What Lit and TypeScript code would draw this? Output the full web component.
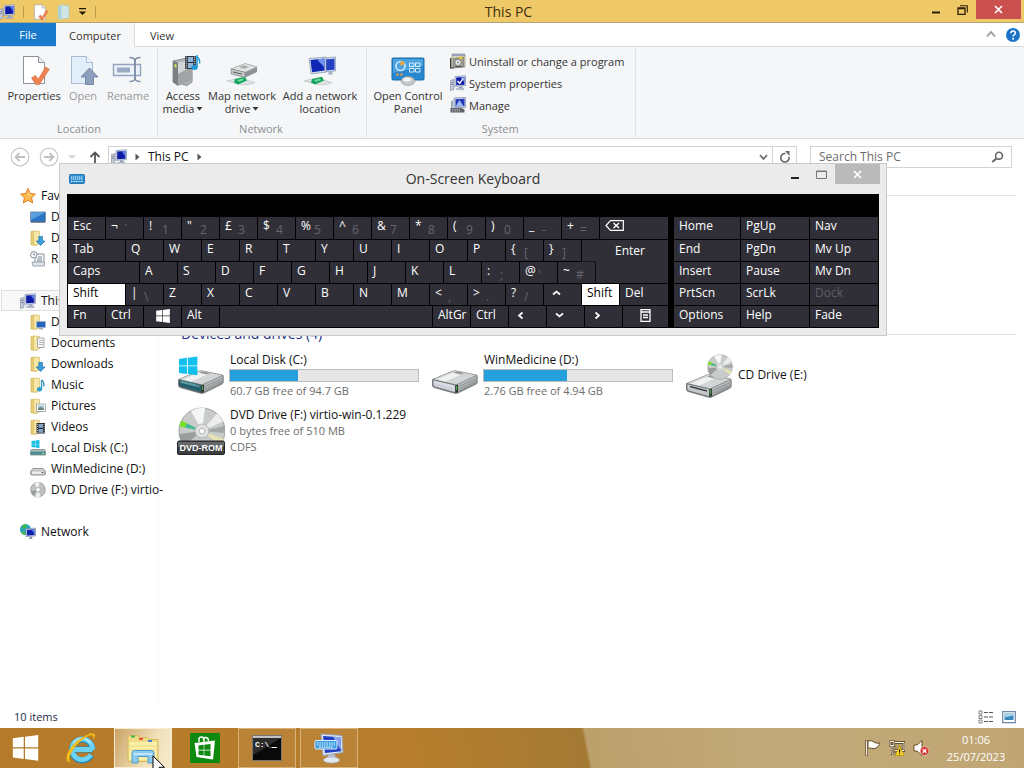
import { LitElement, html, svg, css, nothing } from "lit";
import { customElement } from "lit/decorators.js";
import { classMap } from "lit/directives/class-map.js";

type Art = unknown;

const icon = (w: number, h: number, box: string, body: Art) =>
  html`<svg width=${w} height=${h} viewBox=${box} aria-hidden="true">${body}</svg>`;

/* ---- shared drawings ---- */
const pcArt = svg`
  <path d="M.5 5.500l3.500-1v10l-3.500 1z" fill="#c3c9d4" stroke="#79829a" stroke-width=".6"/>
  <path d="M1.300 7.500h1.800M1.300 9.500h1.800" stroke="#5d6a86" stroke-width=".8"/>
  <path d="M5 1.500L15.500.7v10L5 11.400z" fill="#d5dcea" stroke="#8590ac" stroke-width=".7"/>
  <path d="M6.200 2.600l8.200-.7v7.800l-8.200.5z" fill="#0c1ba6"/>
  <path d="M10.500 2.200l3.900-.3v5.500z" fill="#5e7bea"/>
  <path d="M9 11.200h3.300l.6 2.300H8.600z" fill="#98a2b8"/><path d="M6.500 13.300h7.500v1.400H6.500z" fill="#b9c1d1" stroke="#8b94a8" stroke-width=".4"/>`;
const folderArt = svg`
  <path d="M1 1.500h6.500v13.500H1z" fill="#e9cf72" stroke="#c9a94d" stroke-width=".6"/>
  <path d="M3.500.8l6 .7v12.500l-6 1.500z" fill="#f6e7a6" stroke="#cdb35c" stroke-width=".6"/>`;
const sheetArt = svg`
  <path d="M5.500 1.500h15l6 6V28.500h-21z" fill="#fff" stroke="#8f9299"/>
  <path d="M20.500 1.500v6h6" fill="#e9ebee" stroke="#8f9299"/>`;
const tickArt = svg`<path d="M13.500 23l4-2.400 2.800 3.600L27.500 12l3.800 2.300-9.800 15-3.500.4z" fill="#ee8150" stroke="#d9683a" stroke-width=".6"/>`;

const pc16 = icon(16, 16, "0 0 16 16", pcArt);
const folder = (extra: Art) => icon(16, 16, "0 0 16 16", svg`${folderArt}${extra}`);

const driveBody = (face: string) => svg`
  <path d="M1.500 28.500L22 20q1.500-.5 3.500 0l20 4q1 .5.800 2v5q0 1.500-1.500 2.300L27 42q-1.500.7-3.500.3L3 36.500q-1.500-.6-1.500-2z" fill="#8c8f90" stroke="#6f7273" stroke-width=".7"/>
  <path d="M2.500 28.300L22.500 20q1-.4 2.500 0L45 24.300 25 33.500z" fill="#d3d5d6"/>
  <path d="M6 28.500L22.500 21.500l8 1.700L14 30.700z" fill="#f0f1f1"/>
  <path d="M22 21.700l3.500-1.400 8 1.700-4 1.500z" fill="#9a9da0"/>
  <path d="M2 28.800l22.500 5.200v7.700L4 36q-2-.5-2-2z" fill=${face} stroke="#5d6162" stroke-width=".7"/>
  <path d="M3.500 31l19 4.600" stroke="#fff" stroke-opacity=".35" stroke-width="1.500"/>
  <path d="M27 33.500l18.500-8.500v5.500L27 40z" fill="#b4b7b8"/><path d="M27 36l18.500-8.500M27 38.500l18.500-9" stroke="#85898b" stroke-width=".8"/>
  <path d="M24.300 34.500l2.700-1v7.800l-2.700.7z" fill="#2c3a2e"/><path d="M25.600 35v4" stroke="#52d25a" stroke-width=".8"/>`;
const winLogo = (c: string) => svg`
  <path d="M0 2.600l8.600-1.200v8.300H0zM9.600 1.300L20 0v9.700H9.600zM0 10.700h8.600V19L0 17.800zM9.600 10.700H20v9.700L9.600 19z" fill=${c}/>`;
const discArt = svg`
  <circle cx="25" cy="24" r="23" fill="#c9cbcb" stroke="#8d9090" stroke-width=".8"/>
  <path d="M25 24L14 4a23 23 0 0 1 14-3z" fill="#f4f5f5"/>
  <path d="M25 24L40 6.500a23 23 0 0 1 6 8z" fill="#edeeee"/>
  <path d="M25 24L2.300 19.500A23 23 0 0 1 4.500 13.500z" fill="#7be028"/>
  <path d="M25 24L10 16.500 8 20.500z" fill="#43b5a4"/>
  <path d="M25 24L2 27a23 23 0 0 0 5 12z" fill="#9b9e9e"/>
  <path d="M25 24l22 8a23 23 0 0 1-4 6z" fill="#e7e4b0"/>
  <path d="M25 24L47.500 19a23 23 0 0 1 .2 7z" fill="#a4a7a7"/>
  <circle cx="25" cy="24" r="7" fill="#dfe1e1" stroke="#a3a6a6" stroke-width=".7"/>
  <circle cx="25" cy="24" r="2.800" fill="#fff" stroke="#909393" stroke-width=".6"/>`;

const driveIcons: Record<string, Art> = {
  system: icon(48, 48, "0 0 48 48", svg`${driveBody("#24606f")}<path d="M4 30l15 4" stroke="#45a9a6"/><g transform="translate(2 5.500) scale(.92)">${winLogo("#12c0ee")}</g>`),
  plain: icon(48, 48, "0 0 48 48", driveBody("#cfd0da")),
  cd: icon(48, 48, "0 0 48 48", svg`<g transform="translate(0 4)">${driveBody("#c5c8ca")}<path d="M5 31.500l17 4.500" stroke="#3c3f40" stroke-width="1.400"/></g><g transform="translate(21.500 3) scale(.54)">${discArt}</g>`),
  dvd: icon(48, 48, "0 0 48 48", svg`${discArt}
    <rect x=".5" y="34" width="47" height="13.500" rx="1.500" fill="#3c3e40" stroke="#252628"/>
    <path d="M1 35h46v5H1z" fill="#65686b"/>
    <text x="24" y="44" text-anchor="middle" font-family="Liberation Sans, sans-serif" font-size="9" font-weight="700" fill="#fff">DVD-ROM</text>`),
};

const netBase = svg`
  <path d="M1 26l8-2 11 1 9 2.500-6 2-8 .3z" fill="#dfe3e3" stroke="#b5bcbc" stroke-width=".6"/>
  <path d="M9 24l10-2.200 2 3.700-9 4-4-2z" fill="#13a35c"/><path d="M11 25l6-1.500 1 1.500-5 2z" fill="#6fd9a1"/>`;

const ribbonIcons: Record<string, Art> = {
  properties: icon(32, 32, "0 0 32 32", svg`${sheetArt}${tickArt}`),
  open: icon(32, 32, "0 0 32 32", svg`
    <path d="M4.500 1.500h15l6 6V28.500h-21z" fill="#e3eefb" stroke="#a9bcd4"/><path d="M19.500 1.500v6h6" fill="#f4f8fd" stroke="#a9bcd4"/>
    <path d="M22.500 13l8.500 9h-4.500v7.500h-8V22H14z" fill="#8e9fbc" stroke="#7588a9"/>`),
  rename: icon(32, 32, "0 0 32 32", svg`
    <path d="M1.500 9.500h27v11h-27z" fill="#edf2f9" stroke="#93a5c0" stroke-width="1.400"/>
    <path d="M5 12.500h13v5H5z" fill="#9aabc6"/>
    <path d="M17.500 2.500q4.500 0 5.500 2.500 1-2.500 5.500-2.500M17.500 26.500q4.500 0 5.500-2.500 1 2.500 5.500 2.500" fill="none" stroke="#7c8ba4" stroke-width="1.400"/>
    <path d="M23 4v21" stroke="#7c8ba4" stroke-width="1.800"/>`),
  access: icon(36, 32, "0 0 36 32", svg`
    <path d="M8 6l14-3 5 2v22l-5 3.500L8 27z" fill="#b3b5b6" stroke="#7a7d7f" stroke-width=".8"/>
    <path d="M8 6l5 1.500V31L8 27.500z" fill="#7b7f81"/><path d="M13 7.500L27.500 5v20L13 31z" fill="#d2d4d5"/>
    <path d="M13 19l14.500-8v14L13 31z" fill="#a1a4a5"/><path d="M9.500 9l2 .6v3l-2-.5z" fill="#cfe65a"/>
    <path d="M20 1h11v13H20z" fill="#2b3138"/><path d="M22.800 2h5.400v5h-5.400zM22.800 8h5.400v5h-5.400z" fill="#8fb6d6"/>
    <path d="M21.200 1.500v12M29.800 1.500v12" stroke="#eee" stroke-width="1" stroke-dasharray="1.200 1"/>
    <path d="M32 0v12" stroke="#1d9bd8" stroke-width="1.600"/><ellipse cx="29.500" cy="12.500" rx="3.200" ry="2.500" fill="#1d9bd8"/><path d="M32 1.500q3.500 3 2.500 7" fill="none" stroke="#1d9bd8" stroke-width="1.300"/>`),
  map: icon(32, 32, "0 0 32 32", svg`${netBase}
    <path d="M5 14l14-5.500 12 3.500v5L19 22.500 5 19z" fill="#8f9294"/><path d="M5 14l14-5.500 12 3.500-12 5.300z" fill="#e3e5e5" stroke="#999c9e" stroke-width=".6"/>
    <path d="M5 14l14 3.300v5.200L5 19z" fill="#c7cacb" stroke="#777a7c" stroke-width=".6"/><path d="M13 12l5-1.700 5 1.700-5 2z" fill="#a9acae"/><path d="M7 17l9 2.200" stroke="#55595b"/>`),
  add: icon(34, 32, "0 0 34 32", svg`${netBase}
    <path d="M19 3l13.500-1v14l-11.500 1z" fill="#ccd7ea" stroke="#8593ae" stroke-width=".7"/><path d="M21 4.500l10.500-.8v11l-10 .8z" fill="#2640c4"/><path d="M26 16l3 .5 1 3h-5z" fill="#a8b3c8"/>
    <path d="M6 3.500l17-1.500v15L8 19z" fill="#d4deee" stroke="#8593ae" stroke-width=".7"/><path d="M7.500 5l14-1.400v12L9 17.300z" fill="#1027b4"/><path d="M14 4.400l7.500-.8v9z" fill="#7193f0"/>`),
  control: icon(36, 32, "0 0 36 32", svg`
    <rect x="2" y="3" width="32" height="22" rx="1" fill="#2787cf" stroke="#1b6cab"/><path d="M3 4h30v7L3 18z" fill="#4ba3e0"/>
    <circle cx="10.500" cy="11" r="4.500" fill="none" stroke="#cfeafc" stroke-width="1.600"/><path d="M10.500 11V5.800a5.200 5.200 0 0 1 4.500 3z" fill="#f4a63a"/>
    <path d="M19.500 8h4.500v3.500h-4.500zM25.500 8H30v3.500h-4.500zM19.500 13.500h4.500V17h-4.500zM25.500 13.500H30V17h-4.500z" fill="none" stroke="#d5edfc"/>
    <circle cx="7.500" cy="19.500" r="1.300" fill="#f0a040"/><circle cx="11.500" cy="19.500" r="1.300" fill="#f0a040"/>
    <ellipse cx="18" cy="26" rx="7" ry="4.500" fill="#c4c8cb" stroke="#8f9497" stroke-width=".6"/><ellipse cx="17" cy="24.500" rx="4" ry="2" fill="#f2f4f5"/>`),
  uninstall: icon(16, 16, "0 0 16 16", svg`
    <path d="M2 1h13v13H2z" fill="#d8d5bf" stroke="#8e8b76" stroke-width=".7"/><path d="M2 1h13v2H2z" fill="#9aa2bd"/>
    <path d="M.7 5v10H4" fill="none" stroke="#222" stroke-width="1.200"/><path d="M3.500 5.500l10-1.500v10l-10 1z" fill="#9fa19c" stroke="#66685f" stroke-width=".6"/>
    <circle cx="8" cy="9.500" r="3" fill="#e8ebe8" stroke="#666" stroke-width=".6"/><circle cx="8" cy="9.500" r="1" fill="#888"/><path d="M7 4.200l5.500-.7v3z" fill="#e7c52c"/><path d="M5 13.500h7" stroke="#555"/>`),
  system: icon(16, 16, "0 0 16 16", svg`${pcArt}<path d="M7.500 6l2.200 2.300 3.500-5" fill="none" stroke="#fff" stroke-width="1.400"/>`),
  manage: icon(16, 16, "0 0 16 16", svg`
    <path d="M4 1l11.500-.6v10L4 10.700z" fill="#cdd6e8" stroke="#7f8baa" stroke-width=".7"/><path d="M5.500 2.200l9-.5v7.400l-9 .3z" fill="#2138b8"/>
    <path d="M5.500 9.500l4-6.500 4 6.200z" fill="#9fb6ee"/><path d="M1 4l2-.6v7l-2 .6z" fill="#9fa6b4"/>
    <path d="M.5 11h11l3 1.500V15.500H.5z" fill="#5f6267"/><path d="M2 12.500h8M2 14h8" stroke="#c6c8cc" stroke-width=".7" stroke-dasharray="1.500 .8"/>`),
};

const sideIcons: Record<string, Art> = {
  star: icon(18, 18, "0 0 18 18", svg`<path d="M9 1.500l2.200 5 5.300.6-3.900 3.600 1.100 5.300L9 13.300 4.300 16l1.100-5.300L1.500 7.100l5.300-.6z" fill="#fbb94c" stroke="#e2822a"/><path d="M9 4l1.400 3.600 3 .4L9 9z" fill="#fde29c"/>`),
  desktop: icon(16, 16, "0 0 16 16", svg`<path d="M.5 3h15v10H.5z" fill="#2b74c4" stroke="#8291ab"/><path d="M1 3.500h14L1 11z" fill="#5b9fe0"/><path d="M1 13h14" stroke="#46566e"/>`),
  downloads: folder(svg`<path d="M8.800 6.500h3.600V11H15l-4.400 4.500L6.200 11h2.600z" fill="#3d9fe0" stroke="#1c6fa6" stroke-width=".7"/>`),
  recent: icon(16, 16, "0 0 16 16", svg`<path d="M5 3h9v9H5z" fill="#f4f6f8" stroke="#8b95a1"/><path d="M2 11h12.500v4H3z" fill="#dfe4ea" stroke="#8b95a1" stroke-width=".8"/><circle cx="3.800" cy="3.800" r="3.200" fill="#fff" stroke="#7f8995"/><path d="M3.800 2v2h1.400M8 6h4M7 8h5M7 10h5" fill="none" stroke="#66727f" stroke-width=".8"/>`),
  pc: icon(18, 16, "-1 0 18 16", pcArt),
  deskfolder: folder(svg`<path d="M6.500 7.500h9v6h-9z" fill="#2663c0" stroke="#a6b5cc" stroke-width=".8"/><path d="M9 14.800h4" stroke="#77859c"/>`),
  documents: folder(svg`<path d="M7.500 3h6.500v9.500H7.500z" fill="#fbfbfb" stroke="#8f9499" stroke-width=".8"/><path d="M9 5.500h4M9 7.500h4M9 9.500h4" stroke="#9aa0a6" stroke-width=".8"/>`),
  music: folder(svg`<path d="M11.500 3v9" stroke="#2a9bc8" stroke-width="1.300"/><ellipse cx="9.500" cy="12.300" rx="2.600" ry="2.200" fill="#2f9fd0"/><path d="M11.500 3q3.500 2.500 2 6.500" fill="none" stroke="#3f8fb0" stroke-width="1.400"/>`),
  pictures: folder(svg`<path d="M6.500 6h9v7.500h-9z" fill="#fff" stroke="#8f9aa5" stroke-width=".8"/><path d="M8 7.500h6v4.500H8z" fill="#9cbfd2"/><path d="M8 12v-1.500l2.500-1.500 3.500 1.500V12z" fill="#6a8a74"/>`),
  videos: folder(svg`<path d="M6.500 4h8.500v10.500H6.500z" fill="#2d3238"/><path d="M8.500 5h4.500v3.800H8.500zM8.500 10h4.500v3.800H8.500z" fill="#82a6c4"/><path d="M7.400 5v9M14.200 5v9" stroke="#e4e4e4" stroke-width=".8" stroke-dasharray="1 1"/>`),
  local: icon(16, 16, "0 0 16 16", svg`<g transform="translate(1.500 0) scale(.4)">${winLogo("#1bbfe8")}</g><path d="M1.500 9.500h13l1 2v3.500H.5v-3.500z" fill="#b4bcbe" stroke="#707779" stroke-width=".7"/><path d="M.8 11.500h14.400v3.300H.8z" fill="#4d8f94"/><path d="M12 13.500h2" stroke="#8ff08c"/>`),
  disk: icon(16, 16, "0 0 16 16", svg`<path d="M3 7.500h10l2.500 3v2q0 1.500-1.500 1.500H2q-1.500 0-1.500-1.500v-2z" fill="#d3d5d7" stroke="#7c8082" stroke-width=".8"/><rect x="1.500" y="10" width="13" height="3.300" rx="1" fill="#f1f2f3" stroke="#95999b" stroke-width=".6"/><path d="M11.500 11.600h2" stroke="#555"/>`),
  disc: icon(16, 16, "0 0 50 50", svg`<circle cx="25" cy="24" r="23" fill="#bfc1c1" stroke="#868989" stroke-width="2"/><path d="M25 24L14 4a23 23 0 0 1 16-3zM25 24l8 21a23 23 0 0 1-16 1z" fill="#f0f1f1"/><path d="M25 24L3 30a23 23 0 0 0 7 12z" fill="#969999"/><circle cx="25" cy="24" r="7" fill="#fff" stroke="#9a9d9d" stroke-width="2"/>`),
  network: icon(18, 18, "0 0 18 18", svg`<circle cx="6.500" cy="6.500" r="5.500" fill="#2aa5c4"/><path d="M3 3q3-3 5-1l-1 3-3 1zM2 8l4 1 1 3q-4 0-5-4z" fill="#43b649"/><path d="M7 6l9.500-1v8L7 13.500z" fill="#c9d3e6" stroke="#7c89a6" stroke-width=".7"/><path d="M8 7l7.500-.8V12L8 12.500z" fill="#0e22b0"/><path d="M12 6.600l3.500-.4v4z" fill="#5f80e8"/><path d="M11 13.500h2l.5 2.500h-3.500z" fill="#8f9bb3"/>`),
};

const caret = icon(7, 4, "0 0 7 4", svg`<path d="M.5 0h6l-3 3.500z" fill="#333"/>`);
const crumbArrow = icon(5, 8, "0 0 5 8", svg`<path d="M.5.5v7l4-3.500z" fill="#555"/>`);
const closeX = icon(9, 9, "0 0 9 9", svg`<path d="M1 1l7 7M8 1L1 8" stroke="#fff" stroke-width="1.700"/>`);
const chev = (d: string) => icon(9, 9, "0 0 9 9", svg`<path d=${d} fill="none" stroke="#fff" stroke-width="1.700"/>`);
const up = chev("M1 5.500l3.500-3 3.500 3");
const down = chev("M1 2.500l3.500 3 3.500-3");
const left = chev("M5.500 1.500L2 4.500l3.500 3");
const right = chev("M2.500 1.500L6 4.500l-3.500 3");
const winKey = icon(14, 14, "0 0 20 20.500", winLogo("#fff"));
const backspace = icon(19, 11, "0 0 19 11", svg`<path d="M5.500.7H18.300v9.600H5.500L1 5.500z" fill="none" stroke="#fff" stroke-width="1.200"/><path d="M8.500 3l5.500 5M14 3L8.500 8" stroke="#fff" stroke-width="1.500"/>`);
const menuKey = icon(11, 13, "0 0 11 13", svg`<path d="M1 .7h9v11.600H1z" fill="none" stroke="#fff" stroke-width="1.300"/><path d="M1 3h9M3 6h5M3 8.500h5" stroke="#fff" stroke-width="1.300"/>`);

interface Key {
  main: Art; sub?: string; w: number; name?: string; kind?: string;
}
const k = (main: Art, w = 38, sub?: string, name?: string, kind?: string): Key => ({ main, w, sub, name, kind });
const keyRows: Key[][] = [
  [k("Esc"), k("¬", 38, "`"), k("!", 38, "1"), k('"', 38, "2"), k("£", 38, "3"), k("$", 38, "4"), k("%", 38, "5"), k("^", 38, "6"), k("&", 38, "7"), k("*", 38, "8"), k("(", 38, "9"), k(")", 38, "0"), k("_", 38, "-"), k("+", 38, "="), k(backspace, 69, undefined, "Backspace", "back")],
  [k("Tab", 58), ..."QWERTYUIOP".split("").map((c) => k(c)), k("{", 38, "["), k("}", 38, "]"), k("Enter", 87, undefined, undefined, "enter")],
  [k("Caps", 72), ..."ASDFGHJKL".split("").map((c) => k(c)), k(":", 38, ";"), k("@", 38, "'"), k("~", 38, "#")],
  [k("Shift", 58, undefined, undefined, "held"), k("|", 38, "\\"), ..."ZXCVBNM".split("").map((c) => k(c)), k("<", 38, ","), k(">", 38, "."), k("?", 38, "/"), k(up, 38, undefined, "Up"), k("Shift", 38, undefined, undefined, "held"), k("Del", 49)],
  [k("Fn"), k("Ctrl"), k(winKey, 38, undefined, "Windows", "mid"), k("Alt"), k("", 213, undefined, "Space"), k("AltGr"), k("Ctrl"), k(left, 38, undefined, "Left"), k(down, 38, undefined, "Down"), k(right, 38, undefined, "Right"), k(menuKey, 46, undefined, "Menu", "mid")],
];
const sideKeys = ["Home", "PgUp", "Nav", "End", "PgDn", "Mv Up", "Insert", "Pause", "Mv Dn", "PrtScn", "ScrLk", "Dock", "Options", "Help", "Fade"];

@customElement("screen-keyboard")
export class ScreenKeyboard extends LitElement {
  static styles = css`
    :host { display: flex; flex-direction: column; box-sizing: border-box; background: #ebebeb; border: 1px solid #c9c9c9; padding: 0 7px 7px; font: 12px/18px "Open Sans", "Noto Sans", sans-serif; }
    svg { display: block; flex: none; }
    .bar { display: grid; grid-template-columns: 1fr auto 1fr; height: 30px; align-items: center; color: #333; }
    .title { font-size: 14px; line-height: 20px; }
    .app { display: flex; padding-left: 2px; }
    .controls { display: flex; justify-content: flex-end; align-self: start; height: 20px; margin-right: -1px; }
    .controls button { border: 0; background: none; padding: 0; width: 27px; display: flex; align-items: center; justify-content: center; }
    .controls button.close { width: 45px; background: #bababa; }
    .deck { background: #000; padding: 23px 0 0 1px; display: grid; grid-template-columns: 601fr 5px 205fr; }
    .keys { display: grid; grid-template-columns: repeat(601, minmax(0, 1fr)); grid-template-rows: 23px repeat(4, 22px); }
    .extra { grid-column: 3; display: grid; grid-template-columns: 67fr 69fr 69fr; grid-template-rows: 23px repeat(4, 22px); }
    .key { display: flex; align-items: flex-start; margin: 0 1px 1px 0; border: 0; padding: 0 0 0 5px; background: #302f37; color: #fff; font: inherit; text-align: left; overflow: hidden; white-space: pre; }
    .key svg { margin-top: 5px; margin-left: 3px; }
    .key.back svg { margin-top: 3px; margin-left: 0; }
    .key .glyph { min-width: 13px; }
    .key .sub { padding-top: 4px; color: #66656c; }
    .key.held { background: #fff; color: #000; }
    .key.mid { justify-content: center; padding: 0; }
    .key.mid svg { margin: 3px 0 0; }
    .key.enter { justify-content: center; padding: 2px 0 0 10px; clip-path: polygon(0 0, 100% 0, 100% 100%, 16% 100%, 16% 50%, 0 50%); }
    .key:disabled { color: #5d5c63; }
  `;

  private key(item: Key, row: number, start: number) {
    const place = `grid-row:${row} / span ${item.kind === "enter" ? 2 : 1};grid-column:${start} / span ${item.w}`;
    return html`<button class=${classMap({ key: true, held: item.kind === "held", mid: item.kind === "mid", enter: item.kind === "enter", back: item.kind === "back" })}
      style=${place} aria-label=${item.name ?? nothing}>${item.sub ? html`<span class="glyph">${item.main}</span><span class="sub">${item.sub}</span>` : item.main}</button>`;
  }

  render() {
    return html`
      <div class="bar">
        <span class="app">${icon(16, 12, "0 0 16 12", svg`<rect x=".5" y="1.500" width="15" height="9" rx="1" fill="#2f8ed0" stroke="#2277b4"/><path d="M2 4h12M2 6h12M2 8.500h1.500M4.500 8.500h7M12.500 8.500H14" stroke="#e6f4fd" stroke-width="1.200" stroke-dasharray="1.300 .7"/>`)}</span>
        <span class="title">On-Screen Keyboard</span>
        <div class="controls">
          <button aria-label="Minimise">${icon(8, 10, "0 0 8 10", svg`<path d="M0 8h8v2H0z" fill="#222"/>`)}</button>
          <button aria-label="Maximise">${icon(11, 9, "0 0 11 9", svg`<path d="M.5 1h10v7.500H.5zM.5 1.500h10" fill="none" stroke="#777"/>`)}</button>
          <button class="close" aria-label="Close">${closeX}</button>
        </div>
      </div>
      <div class="deck">
        <div class="keys">
          ${keyRows.map((row, r) => {
            let x = 1;
            return row.map((item) => {
              const start = x;
              x += item.w;
              return this.key(item, r + 1, start);
            });
          })}
        </div>
        <div class="extra">
          ${sideKeys.map((name) => html`<button class="key" ?disabled=${name === "Dock"}>${name}</button>`)}
        </div>
      </div>`;
  }
}

const sideItems: Array<[string, string, string] | null> = [
  ["star", "Favourites", "top"], ["desktop", "Desktop", ""], ["downloads", "Downloads", ""], ["recent", "Recent places", ""], null,
  ["pc", "This PC", "top current"], ["deskfolder", "Desktop", ""], ["documents", "Documents", ""], ["downloads", "Downloads", ""],
  ["music", "Music", ""], ["pictures", "Pictures", ""], ["videos", "Videos", ""], ["local", "Local Disk (C:)", ""],
  ["disk", "WinMedicine (D:)", ""], ["disc", "DVD Drive (F:) virtio-", ""], null, ["network", "Network", "top"],
];
interface Drive { art: string; name: string; used?: number; lines: string[] }
const drives: Drive[] = [
  { art: "system", name: "Local Disk (C:)", used: 36, lines: ["60.7 GB free of 94.7 GB"] },
  { art: "plain", name: "WinMedicine (D:)", used: 44, lines: ["2.76 GB free of 4.94 GB"] },
  { art: "cd", name: "CD Drive (E:)", lines: [] },
  { art: "dvd", name: "DVD Drive (F:) virtio-win-0.1.229", lines: ["0 bytes free of 510 MB", "CDFS"] },
];

@customElement("app-root")
export class AppRoot extends LitElement {
  static styles = css`
    :host { display: flex; flex-direction: column; height: 100vh; position: relative; overflow: hidden; background: #fff; font: 12px/16px "Open Sans", "Noto Sans", sans-serif; color: #111; }
    * { box-sizing: border-box; }
    svg { display: block; flex: none; }
    button { border: 0; background: none; padding: 0; margin: 0; font: inherit; color: inherit; }
    a { color: inherit; text-decoration: none; }
    .titlebar { display: grid; grid-template-columns: 1fr auto 1fr; height: 23px; flex: none; background: #efc968; border-bottom: 1px solid #b5a478; padding-right: 7px; color: #3d2f10; }
    .quick { display: flex; align-items: center; gap: 8px; }
    .sep { width: 1px; height: 12px; background: #c09a48; }
    .title { font-size: 14px; line-height: 23px; }
    .controls { display: flex; justify-content: flex-end; height: 19px; margin-right: -4px; }
    .controls button { width: 27px; display: flex; align-items: center; justify-content: center; }
    .controls .close { width: 45px; background: #c9504e; }
    .tabs { display: flex; height: 24px; flex: none; font-size: 11px; line-height: 23px; color: #333; border-bottom: 1px solid #dadbdc; }
    .tabs button { text-align: center; height: 23px; padding-top: 1px; }
    .tabs .file { width: 56px; background: #1979ca; color: #fff; padding: 0; }
    .tabs .on { width: 79px; height: 24px; background: #f5f6f7; border-right: 1px solid #dadbdc; }
    .tabs .view { width: 54px; }
    .tabs .end { margin-left: auto; display: flex; align-items: center; gap: 10px; padding-right: 4px; }
    .ribbon { display: flex; flex: none; height: 92px; background: #f5f6f7; border-bottom: 1px solid #dadbdc; font-size: 11px; line-height: 13px; color: #333; }
    .group { display: flex; flex-direction: column; justify-content: space-between; padding: 7px 6px 2px 4px; border-right: 1px solid #e0e1e3; margin: 1px 0; }
    .group.first { padding-left: 6px; padding-right: 5px; }
    .row { display: flex; }
    .big { display: flex; flex-direction: column; align-items: center; gap: 2px; }
    .w42 { width: 42px; } .w48 { width: 48px; } .w56 { width: 56px; } .w74 { width: 74px; } .w76 { width: 76px; } .w80 { width: 80px; }
    .big .two { display: flex; align-items: center; justify-content: center; gap: 2px; }
    .big:disabled { color: #97999c; }
    .caption { text-align: center; color: #8b8e93; }
    .list { display: flex; flex-direction: column; padding-left: 5px; padding-right: 5px; margin-top: -5px; }
    .list button { display: flex; align-items: center; gap: 3px; height: 22px; }
    .address { display: flex; align-items: center; flex: none; height: 36px; padding: 0 12px 0 10px; }
    .nav { display: flex; align-items: center; gap: 9px; width: 98px; flex: none; padding-right: 7px; }
    .nav button { display: flex; }
    .nav .parent { margin-left: auto; }
    .path { flex: 1; height: 22px; border: 1px solid #d3d3d3; display: flex; align-items: center; gap: 8px; padding-left: 2px; }
    .path .tail { margin-left: auto; display: flex; align-items: center; height: 20px; }
    .path .tail button { display: flex; justify-content: center; align-items: center; }
    .path .tail .reload { width: 24px; border-left: 1px solid #d3d3d3; height: 20px; }
    .path .tail .drop { width: 18px; }
    .search { display: flex; align-items: center; width: 202px; height: 22px; margin-left: 13px; border: 1px solid #d3d3d3; padding: 0 7px 0 8px; }
    .search input { flex: 1; min-width: 0; border: 0; outline: 0; padding: 0; background: none; font: inherit; color: #666; }
    .search input::placeholder { color: #6d6d6d; opacity: 1; }
    .body { display: flex; flex: 1; min-height: 0; }
    .side { width: 159px; flex: none; border-right: 1px solid #f8f8f8; padding: 10px 1px 0; }
    .side a { display: flex; align-items: center; gap: 5px; height: 21px; white-space: nowrap; border: 1px solid transparent; border-right: 0; padding-left: 28px; }
    .side a.top { padding-left: 17px; gap: 4px; }
    .side a.current { background: #f8f8f8; border-color: #dedede; }
    .side .space { height: 21px; }
    .main { flex: 1; min-width: 0; padding: 20px 8px 0 18px; }
    .folders { border-top: 1px solid #e2e2e2; height: 128px; }
    .heading { display: flex; align-items: center; gap: 10px; margin: 0; padding-left: 4px; font-weight: 400; font-size: 14px; line-height: 22px; color: #1e3287; }
    .heading::after { content: ""; flex: 1; height: 1px; background: #e2e2e2; }
    .drives { display: grid; grid-template-columns: repeat(auto-fill, 254px); grid-auto-rows: 56px; padding-top: 2px; }
    .drive { display: flex; align-items: center; gap: 5px; }
    .info { flex: 1; padding-right: 12px; white-space: nowrap; }
    .meter { height: 13px; margin: 1px 0 1px -1px; border: 1px solid #bcbcbc; background: #e6e6e6; }
    .fill { height: 11px; background: #26a0da; }
    .sub { font-size: 11px; color: #6d6d6d; }
    .status { display: flex; align-items: center; height: 22px; flex: none; padding: 0 8px 0 14px; font-size: 11px; color: #1e2b4a; gap: 8px; }
    .status span { flex: 1; }
    .taskbar { display: flex; height: 40px; flex: none; gap: 4px; background: linear-gradient(79deg, #b57b2b 0%, #b67d2c 40%, #a47a34 57.100%, #bba06b 57.400%, #c3aa7a 75%, #bfa673 100%); color: #fff; font-size: 11px; }
    .task { width: 58px; display: flex; align-items: center; justify-content: center; }
    .task.start { width: 50px; margin-right: -2px; }
    .task.open { border: 1px solid #d9b27a; background: #c3935050; }
    .task.active { border: 1px solid #f8ecd2; background: linear-gradient(115deg, #cba366, #f0dfb8 60%, #f7ebcd); }
    .tray { margin-left: auto; display: flex; align-items: center; gap: 8px; }
    .clock { width: 87px; text-align: center; line-height: 17px; padding-right: 9px; }
    .osk { position: absolute; left: 59px; top: 163px; width: 828px; }
    .pointer { position: absolute; left: 152px; top: 755px; }
  `;

  private big(art: string, cls: string, one: string, two = "", drop = false, off = false) {
    return html`<button class="big ${cls}" ?disabled=${off}>${ribbonIcons[art]}<span>${one}${two ? html`<span class="two">${two}${drop ? caret : nothing}</span>` : nothing}</span></button>`;
  }

  render() {
    return html`
      <header class="titlebar">
        <div class="quick">
          ${icon(15, 16, "1 0 15 16", pcArt)}<span class="sep"></span>${icon(17, 16, "1 0 32 30", svg`${sheetArt}${tickArt}`)}
          ${icon(13, 16, "0 0 13 16", svg`<path d="M1 1.500h6V15H1z" fill="#a9d3df"/><path d="M4 .8l8 1V14l-8 1.200z" fill="#cfe6e4" stroke="#a7c8c6" stroke-width=".6"/>`)}
          ${icon(9, 9, "0 0 9 9", svg`<path d="M1 1h7v1.300H1zM.8 4.500h7.400L4.500 8z" fill="#221800"/>`)}<span class="sep"></span>
        </div>
        <span class="title">This PC</span>
        <div class="controls">
          <button aria-label="Minimise">${icon(8, 10, "0 0 8 10", svg`<path d="M0 6.500h8v2H0z" fill="#2c1d06"/>`)}</button>
          <button aria-label="Restore">${icon(11, 10, "0 0 11 10", svg`<path d="M1 3h7v6.500H1zM1 3.700h7" fill="none" stroke="#2c1d06" stroke-width="1.300"/><path d="M3 .8h7.300v6.700" fill="none" stroke="#2c1d06" stroke-width="1.100"/>`)}</button>
          <button class="close" aria-label="Close">${closeX}</button>
        </div>
      </header>
      <nav class="tabs">
        <button class="file">File</button><button class="on">Computer</button><button class="view">View</button>
        <div class="end">
          ${icon(10, 10, "0 0 10 10", svg`<path d="M1 6.500l4-4.500 4 4.500" fill="none" stroke="#999" stroke-width="1.800"/>`)}
          <button aria-label="Help">${icon(14, 14, "0 0 14 14", svg`<circle cx="7" cy="7" r="7" fill="#1c74c8"/><path d="M4.800 5.300q.2-2.200 2.300-2.200t2.200 1.900q0 1.200-1.200 1.900-1 .6-1 1.600" fill="none" stroke="#fff" stroke-width="1.500"/><circle cx="7.100" cy="10.700" r="1" fill="#fff"/>`)}</button>
        </div>
      </nav>
      <section class="ribbon">
        <div class="group first">
          <div class="row">${this.big("properties", "w56", "Properties")}${this.big("open", "w42", "Open", "", false, true)}${this.big("rename", "w48", "Rename", "", false, true)}</div>
          <div class="caption">Location</div>
        </div>
        <div class="group">
          <div class="row">${this.big("access", "w42", "Access", "media", true)}${this.big("map", "w76", "Map network", "drive", true)}${this.big("add", "w80", "Add a network", "location")}</div>
          <div class="caption">Network</div>
        </div>
        <div class="group">
          <div class="row">
            ${this.big("control", "w74", "Open Control", "Panel")}
            <div class="list">
              <button>${ribbonIcons.uninstall}Uninstall or change a program</button>
              <button>${ribbonIcons.system}System properties</button>
              <button>${ribbonIcons.manage}Manage</button>
            </div>
          </div>
          <div class="caption">System</div>
        </div>
      </section>
      <div class="address">
        <div class="nav">
          <button aria-label="Back">${icon(20, 20, "0 0 20 20", svg`<circle cx="10" cy="10" r="8.800" fill="none" stroke="#c8c8c8" stroke-width="1.200"/><path d="M15 10H6M9.500 6L5.500 10l4 4" fill="none" stroke="#c0c0c0" stroke-width="1.800"/>`)}</button>
          <button aria-label="Forward">${icon(20, 20, "0 0 20 20", svg`<circle cx="10" cy="10" r="8.800" fill="none" stroke="#c8c8c8" stroke-width="1.200"/><path d="M5 10h9M10.500 6l4 4-4 4" fill="none" stroke="#c0c0c0" stroke-width="1.800"/>`)}</button>
          ${icon(8, 5, "0 0 8 5", svg`<path d="M0 0h8L4 4z" fill="#d8d8d8"/>`)}
          <button class="parent" aria-label="Up">${icon(12, 14, "0 0 12 14", svg`<path d="M6 13V2.500M1.500 7L6 2.500 10.500 7" fill="none" stroke="#555" stroke-width="1.800"/>`)}</button>
        </div>
        <div class="path">
          ${pc16}${crumbArrow}<a href="#pc">This PC</a>${crumbArrow}
          <div class="tail">
            <button class="drop" aria-label="Previous locations">${icon(9, 7, "0 0 9 7", svg`<path d="M1 1l3.500 4L8 1" fill="none" stroke="#666" stroke-width="1.700"/>`)}</button>
            <button class="reload" aria-label="Refresh">${icon(12, 12, "0 0 12 12", svg`<path d="M10 5.800A4.200 4.200 0 1 1 6.500 2.600" fill="none" stroke="#666" stroke-width="1.600"/><path d="M6 0h4.500v5z" fill="#666"/>`)}</button>
          </div>
        </div>
        <label class="search"><input type="text" aria-label="Search This PC" placeholder="Search This PC" />
          ${icon(13, 12, "0 0 13 12", svg`<circle cx="8" cy="4.700" r="3.400" fill="none" stroke="#666" stroke-width="1.600"/><path d="M5.500 7.500L1.200 11" stroke="#666" stroke-width="2"/>`)}</label>
      </div>
      <div class="body">
        <nav class="side">
          ${sideItems.map((it) => (it ? html`<a href="#place" class=${it[2]}>${sideIcons[it[0]]}<span>${it[1]}</span></a>` : html`<div class="space"></div>`))}
        </nav>
        <main class="main">
          <div class="folders"></div>
          <h2 class="heading">Devices and drives (4)</h2>
          <div class="drives">
            ${drives.map((d) => html`<div class="drive">${driveIcons[d.art]}
              <div class="info"><div>${d.name}</div>
                ${d.used ? html`<div class="meter"><div class="fill" style=${`width:${d.used}%`}></div></div>` : nothing}
                ${d.lines.map((l) => html`<div class="sub">${l}</div>`)}</div></div>`)}
          </div>
        </main>
      </div>
      <footer class="status"><span>10 items</span>
        <button aria-label="Details">${icon(16, 14, "0 0 16 14", svg`<path d="M1 1h3v3H1zM1 5.500h3v3H1zM1 10h3v3H1z" fill="#fff" stroke="#777" stroke-width=".9"/><path d="M6 2.500h4M11 2.500h4M6 7h4M11 7h4M6 11.500h4M11 11.500h4" stroke="#555" stroke-width="1.200"/>`)}</button>
        <button aria-label="Large icons">${icon(14, 13, "0 0 14 13", svg`<path d="M.7.7h12.600v11H.7z" fill="#fff" stroke="#6b87a8" stroke-width="1.200"/><path d="M2.500 2.500h9V9h-9z" fill="#3789bd"/><path d="M2.500 2.500h9v2l-9 2z" fill="#a5d3ec"/>`)}</button>
      </footer>
      <footer class="taskbar">
        <button class="task start" aria-label="Start">${icon(27, 26, "0 0 20 20.500", winLogo("#fff"))}</button>
        <button class="task" aria-label="Internet Explorer">${icon(34, 34, "0 0 34 34", svg`
          <path d="M9 18.500h20M28.500 18.500a10.300 10.300 0 1 0-1.300 5.500" fill="none" stroke="#1c86bd" stroke-width="6"/>
          <path d="M9 18.500h19.500v.300a10.300 10.300 0 1 0-1.600 5" fill="none" stroke="#6cd3f5" stroke-width="4.800"/>
          <path d="M9.500 12.500q3-5 8.500-5 6 0 8.500 5" fill="none" stroke="#b4ecfd" stroke-width="1.600"/>
          <path d="M31 4.500q-1.500-4.500-10 .5Q8 12 3.500 22.500.5 31.500 7 31.500q-3-1.500-1-7.500Q10 14.500 20.500 7q6.500-4 8.500-2.500 1 1 0 3.500 2-1.500 2-3.500z" fill="#f9c81c" stroke="#d99a10" stroke-width=".6"/>`)}</button>
        <button class="task active" aria-label="File Explorer">${icon(32, 32, "0 0 32 32", svg`
          <path d="M1 5q0-1.500 1.500-1.500h8l1.500 2h9l1.500 2H31v22H1z" fill="#f0dc86" stroke="#d3b95a"/><path d="M2 10h28v18H2z" fill="#fbeea6"/>
          <path d="M4 3.500h4v2H4z" fill="#3cb44b"/><path d="M12 6h4v2h-4z" fill="#e4573d"/><path d="M21 8h4v2h-4z" fill="#3e86d6"/><path d="M2 14h28M2 18h28" stroke="#efd98a"/>
          <path d="M5 31V21q0-2.500 2.500-2.500h17Q27 18.500 27 21v10h-6v-6.500H11V31z" fill="#8ccbee" stroke="#4d9dcc"/><path d="M6.500 22h19" stroke="#d2effc" stroke-width="1.500"/>`)}</button>
        <button class="task" aria-label="Store">${icon(30, 30, "0 0 30 30", svg`<path d="M0 0h30v30H0z" fill="#0f8a10"/>
          <path d="M9 9V6q0-2 2.500-2T14 6v3M13 6.500Q13.500 4 16 4.500t2.500 3.500" fill="none" stroke="#fff" stroke-width="1.400"/><path d="M4.500 10L25 7.500 23 26.500 6.500 24z" fill="#fff"/>
          <g transform="translate(8.500 11) scale(.6)">${winLogo("#0f8a10")}</g>`)}</button>
        <button class="task open" aria-label="Command Prompt">${icon(30, 26, "0 0 30 26", svg`<path d="M.5.500h29v25H.5z" fill="#0a0a0a" stroke="#777"/><path d="M1 1h28v2H1z" fill="#c3c3c3"/><path d="M1 3h28L1 20z" fill="#2c2c2c"/>
          <text x="3" y="12" font-family="Liberation Mono, monospace" font-size="8" font-weight="700" fill="#fff">C:\\_</text><path d="M20 12.500h5" stroke="#fff"/>`)}</button>
        <button class="task open" aria-label="On-Screen Keyboard">${icon(32, 32, "0 0 32 32", svg`
          <path d="M8 2l21 1.500 1 17-20 3z" fill="#dfe5f0" stroke="#9aa6bf"/><path d="M10 4l17.500 1.200.8 14L12 21z" fill="#1d3fc0"/><path d="M20 4.700l7.500.5.8 14z" fill="#89a4ef"/>
          <path d="M15 22.500h7l1 4h-9z" fill="#b9c2d3"/><ellipse cx="18.500" cy="28" rx="8" ry="3" fill="#e3e8f0" stroke="#a9b2c4" stroke-width=".7"/>
          <rect x="2" y="8.500" width="22" height="8.500" rx="1" fill="#3b9ce0" stroke="#d8effc"/><path d="M4 11h18M4 13h18M6 15.200h14" stroke="#e9f7ff" stroke-width="1.200" stroke-dasharray="1.500 .9"/>`)}</button>
        <div class="tray">
          ${icon(16, 18, "0 0 16 18", svg`<path d="M1.700 1v16" stroke="#5b3e1c" stroke-width="2.600"/><path d="M1.700 1.500v15" stroke="#fff" stroke-width="1.200"/><path d="M3 2q3.500-1 5.500.8Q11 5 15 4q-1 4-5 5.500-3 0-7-.5z" fill="#fff" stroke="#5b3e1c" stroke-width=".9"/>`)}
          ${icon(16, 16, "0 0 16 16", svg`<path d="M5 2.500h10v8H5z" fill="#b69a64" stroke="#4a3418" stroke-width="2.400"/><path d="M5 2.500h10v8H5z" fill="none" stroke="#fff"/><path d="M1 1.500h4v4H1zM3 5.500V14h5" fill="#8f7444" stroke="#4a3418" stroke-width="2"/><path d="M1 1.500h4v4H1zM3 5.500V14h5" fill="none" stroke="#fff" stroke-width=".9"/><path d="M10.500 6.500l5 9h-9.500z" fill="#fbd51c" stroke="#a98300" stroke-width=".6"/><path d="M10.600 9.500v3M10.600 13.300v1" stroke="#222" stroke-width="1.200"/>`)}
          ${icon(16, 16, "0 0 16 16", svg`<path d="M1 5h3l5-4.500v15L4 11H1z" fill="#fff" stroke="#5b3e1c" stroke-width=".9"/><circle cx="11.500" cy="11" r="4.400" fill="#d6312b" stroke="#f4d5cd" stroke-width=".7"/><path d="M9.700 9.200l3.600 3.600M13.300 9.200l-3.600 3.600" stroke="#fff" stroke-width="1.400"/>`)}
          <div class="clock">01:06<br />25/07/2023</div>
        </div>
      </footer>
      <screen-keyboard class="osk"></screen-keyboard>
      <div class="pointer">${icon(14, 20, "0 0 14 20", svg`<path d="M1 .8v16l3.800-3.600 2.500 5.800 2.300-1-2.500-5.700h5.300z" fill="#fff" stroke="#000"/>`)}</div>`;
  }
}
